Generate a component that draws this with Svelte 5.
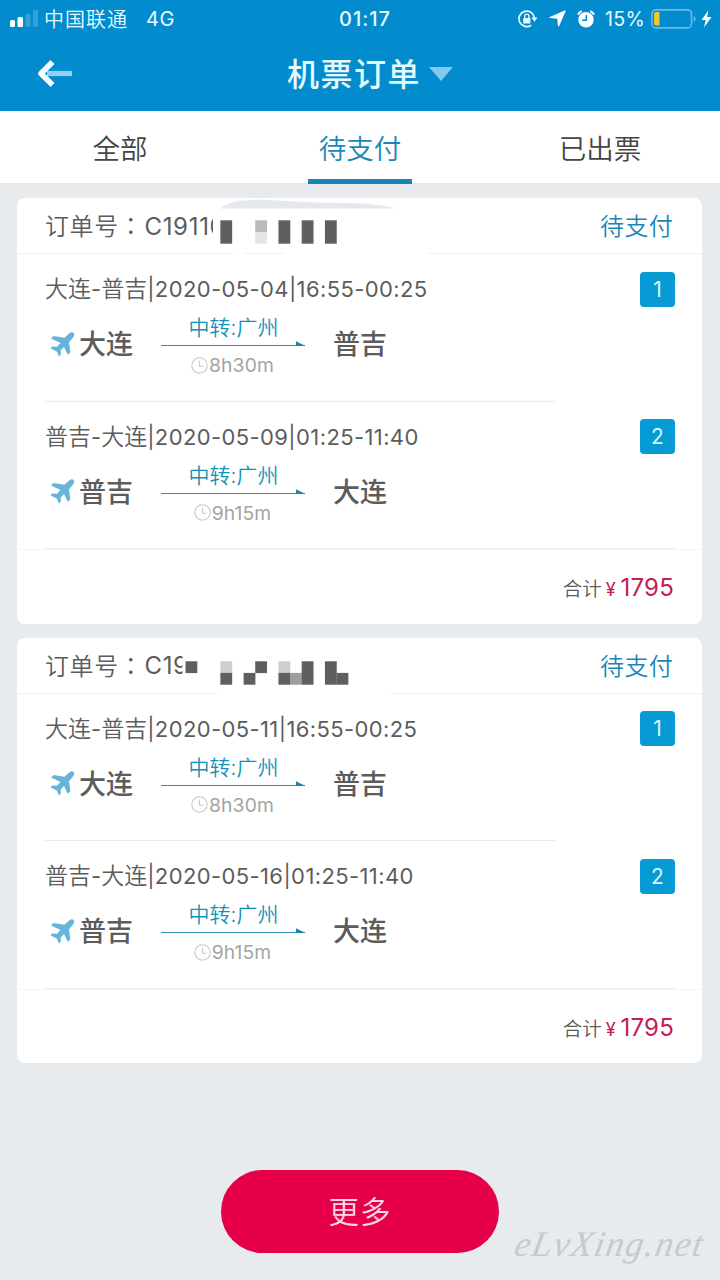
<script lang="ts">
  type Block = [number, number, string];

  const dark = '#5f5f5f';
  let active = $state(1);
  const tabs = ['全部', '待支付', '已出票'];

  // mosaic cells: column, row, colour
  const orders = [
    {
      no: 'C19110',
      cut: 196,
      gaps: [[216, 11], [267, 144]],
      smudge: true,
      top: 22.3,
      blocks: [
        [3, 0, dark], [3, 1, dark], [6, 0, '#bababa'], [6, 1, '#e5e5e5'],
        [8, 0, dark], [8, 1, dark], [10, 0, dark], [10, 1, dark], [12, 0, dark], [12, 1, dark]
      ] as Block[],
      legs: [
        { from: '大连', to: '普吉', date: '2020-05-04', time: '16:55-00:25', via: '广州', cost: '8h30m' },
        { from: '普吉', to: '大连', date: '2020-05-09', time: '01:25-11:40', via: '广州', cost: '9h15m' }
      ],
      total: 1795
    },
    {
      no: 'C19',
      cut: 165.5,
      gaps: [[201, 172]],
      smudge: false,
      top: 23.3,
      blocks: [
        [0, 0, dark], [3, 0, '#cecece'], [3, 1, dark], [5, 1, dark], [6, 0, dark],
        [8, 0, '#cecece'], [8, 1, dark], [9, 1, '#9e9e9e'], [10, 0, dark], [10, 1, dark],
        [12, 0, dark], [12, 1, dark], [13, 1, dark]
      ] as Block[],
      legs: [
        { from: '大连', to: '普吉', date: '2020-05-11', time: '16:55-00:25', via: '广州', cost: '8h30m' },
        { from: '普吉', to: '大连', date: '2020-05-16', time: '01:25-11:40', via: '广州', cost: '9h15m' }
      ],
      total: 1795
    }
  ];
</script>

<div class="app">
  <header>
    <div class="status">
      <div class="side">
        <svg class="signal" width="28" height="18" viewBox="0 0 28 18">
          <rect x="0" y="10" width="5" height="7" rx="1.5" fill="#fff" />
          <rect x="7.5" y="7" width="5.5" height="10" rx="1.5" fill="#fff" />
          <rect x="15.5" y="3.5" width="5" height="13.5" rx="1.5" fill="#369fda" />
          <rect x="23" y="0" width="5" height="17" rx="1.5" fill="#369fda" />
        </svg>
        <span class="carrier">中国联通</span>
        <span class="net">4G</span>
      </div>
      <span class="clock">01:17</span>
      <div class="side right">
        <svg width="20" height="18" viewBox="0 0 20 18" fill="none" stroke="#e6fbff" stroke-width="1.7">
          <path d="M13.2 15.3A7.8 7.8 0 1 1 16.5 8" />
          <path d="M13.4 7.6h6.2l-3.1 4.2z" fill="#e6fbff" stroke="none" />
          <rect x="5.2" y="8" width="7.2" height="5.5" rx=".6" fill="#e6fbff" stroke="none" />
          <path d="M6.7 8V6.3a2.1 2.1 0 0 1 4.2 0V8" stroke-width="1.3" />
        </svg>
        <svg class="loc" width="17" height="17" viewBox="0 0 17 17"><path d="M15.7.4q1.2-.2.8 1L10.2 16q-.9 1.2-1.3-.3L8.3 8.7 1 8q-1.4-.3-.3-1.1z" fill="#fff" /></svg>
        <svg class="alarm" width="18" height="18" viewBox="0 0 18 18">
          <circle cx="9" cy="9.7" r="7.7" fill="#fff" />
          <path d="M.9 4.6A10 10 0 0 1 4.8 1.2M17.1 4.6a10 10 0 0 0-3.9-3.4" fill="none" stroke="#fff" stroke-width="2" />
          <path d="M9.3 5v5.3H5.2" fill="none" stroke="#028bcd" stroke-width="1.5" />
        </svg>
        <span class="percent">15%</span>
        <svg class="battery" width="45" height="20" viewBox="0 0 45 20">
          <rect x=".9" y=".9" width="39.6" height="18" rx="4" fill="none" stroke="#68bce7" stroke-width="1.6" />
          <path d="M42.6 7c2.6.8 2.6 5 0 6z" fill="#68bce7" />
          <path d="M8.5 3v13.5H5.2a2.2 2.2 0 0 1-2.2-2.2V5.2A2.2 2.2 0 0 1 5.2 3z" fill="#edc832" />
        </svg>
        <svg class="bolt" width="11" height="18" viewBox="0 0 11 18"><path d="M7.4.3.5 10h4.2L3 17.6 10.5 7H6.2z" fill="#fff" /></svg>
      </div>
    </div>
    <div class="nav">
      <svg class="back" width="36" height="30" viewBox="0 0 36 30">
        <path d="M11 14.5h25" stroke="#91d2f2" stroke-width="5.2" />
        <path d="M16.5 3 5 14.5 16.5 26" fill="none" stroke="#f5feff" stroke-width="5.6" stroke-linejoin="round" />
      </svg>
      <h1>机票订单</h1>
      <svg class="caret" width="24" height="14" viewBox="0 0 24 14"><path d="M0 0h24L12 14z" fill="#83c9ee" /></svg>
    </div>
  </header>

  <nav class="tabs">
    {#each tabs as tab, i}
      <button class:active={active === i} onclick={() => (active = i)}><span>{tab}</span></button>
    {/each}
  </nav>

  <main>
    {#each orders as order}
      <section class="card">
        <div class="head">
          <span class="label">订单号：</span><span class="no">{order.no}</span>
          <span class="state">待支付</span>
          <svg class="mask" width="685" height="57" viewBox="0 0 685 57">
            <rect x={order.cut} y="8" width="176" height="40" fill="#fff" />
            {#each order.gaps as [x, w]}
              <rect {x} y="50" width={w} height="7" fill="#fff" />
            {/each}
            {#if order.smudge}
              <path d="M203 10.5C211 4 224 1.5 245 1.8S290 5 325 5q35 0 54 5.5z" fill="#e7e8ec" />
            {/if}
            {#each order.blocks as [col, row, fill]}
              <rect x={168.5 + col * 11.62} y={order.top + row * 11.6} width="11.8" height="11.8" {fill} />
            {/each}
          </svg>
        </div>

        {#each order.legs as leg, i}
          <div class="leg">
            <div class="info">
              <span class="trip"><b>{leg.from}</b>-<b>{leg.to}</b><span class="when">|{leg.date}|{leg.time}</span></span>
              <span class="badge">{i + 1}</span>
            </div>
            <div class="route">
              <svg class="plane" width="25" height="25" viewBox="0 0 25 25">
                <path d="M23.6.9c1.3 1.3.5 3.5-1.2 5.3l-3.4 4 1.4 10-2.7 2.5-3.7-7.8-3.3 3.5.2 4.1L9 24.5l-2.3-5-6.4-3.3 1.9-1.7 4.6.3 3.7-3.8L1 6.6 3.6 3.9 14.5 5.8l4.1-3.7C20.3.4 22.4-.3 23.6.9z" fill="#67b4da" />
              </svg>
              <span class="city">{leg.from}</span>
              <div class="mid">
                <span class="via">中转:{leg.via}</span>
                <svg class="line" width="145" height="7" viewBox="0 0 145 7">
                  <path d="M0 5.5h144" stroke="#2a8fbf" stroke-width="1.2" />
                  <path d="M135 1.2 144.5 6H135z" fill="#1d82b3" />
                </svg>
                <span class="cost">
                  <svg width="17" height="17" viewBox="0 0 17 17" fill="none" stroke="#c8c8c8" stroke-width="1.1">
                    <circle cx="8.5" cy="8.5" r="7.7" />
                    <path d="M8.5 3.8v5.4h4.2" />
                  </svg>{leg.cost}
                </span>
              </div>
              <span class="city">{leg.to}</span>
            </div>
          </div>
        {/each}

        <div class="foot">
          <span class="sum">合计</span><span class="yen">¥</span><span class="price">{order.total}</span>
        </div>
      </section>
    {/each}
  </main>

  <button class="more">更多</button>
  <span class="site">eLvXing.net</span>
</div>

<style>
:global(body) { background: #e7ebee; }
.app {
  position: relative; width: 720px; height: 1280px; overflow: hidden;
  display: flex; flex-direction: column; background: #e7ebee;
  font-family: Inter, "Noto Sans CJK SC", sans-serif; font-weight: 350; color: #5c5c5c;
}
svg { display: block; flex: none; }
button { border: 0; padding: 0; background: none; font: inherit; color: inherit; }

header { height: 111px; background: #028bcd; color: #e6fbff; flex: none; }
.status { height: 37px; display: flex; align-items: center; font-size: 18px; }
.side { flex: 1; display: flex; align-items: center; padding-left: 10px; }
.side.right { justify-content: flex-end; padding: 0 8px 0 0; }
.carrier { font-size: 20px; letter-spacing: 1px; margin-left: 6px; }
.net { margin-left: 18px; font-size: 20px; letter-spacing: .5px; font-weight: 400; }
.clock { width: 54px; margin-left: 8px; text-align: center; font-size: 20px; font-weight: 500; letter-spacing: 1px; white-space: nowrap; }
.loc { margin-left: 11px; }
.alarm { margin-left: 11px; }
.percent { margin-left: 10px; font-size: 19.7px; letter-spacing: .2px; font-weight: 400; }
.battery { margin-left: 6px; }
.bolt { margin-left: 5px; }

.nav { height: 74px; display: flex; align-items: center; padding-left: 36px; }
.back { margin-bottom: 1px; }
h1 { margin: 0 0 0 215px; font-size: 32px; font-weight: 500; letter-spacing: 1.5px; line-height: 1; position: relative; top: 1px; }
.caret { margin-left: 8px; margin-bottom: 1px; }

.tabs { height: 72px; flex: none; display: flex; background: #fff; }
.tabs button { flex: 1; display: flex; justify-content: center; font-size: 27.5px; color: #454545; }
.tabs span { height: 73px; line-height: 76px; padding: 0 11px; box-sizing: border-box; position: relative; }
.tabs .active { color: #1b86b9; }
.tabs .active span { border-bottom: 5px solid #1a84b8; }

main { padding: 15px 18px 0 17px; display: flex; flex-direction: column; gap: 14px; }
.card { height: 425.5px; background: #fff; border-radius: 8px; display: flex; flex-direction: column; }
.head {
  position: relative; height: 53px; display: flex; align-items: center;
  padding: 0 29px 2px 28px; border-bottom: 1px solid #f0f0f0; font-size: 24px;
}
.label { font-family: "Noto Sans CJK TC", sans-serif; letter-spacing: .6px; }
.no { letter-spacing: .7px; margin: 3px 0 0 1px; font-weight: 400; }
.state { margin-left: auto; color: #1b86b9; letter-spacing: .3px; }
.mask { position: absolute; left: 0; top: 0; }

.leg { height: 147.5px; box-sizing: border-box; padding: 17px 27px 0 28px; position: relative; }
.leg::after { content: ''; position: absolute; left: 28px; bottom: 0; width: 511px; height: 1px; background: #ececec; }
.leg + .leg::after { width: 630px; height: 2px; bottom: -1px; background: #f0f0f0; }
.info { height: 36px; display: flex; align-items: center; justify-content: space-between; font-size: 22px; font-weight: 400; }
.trip { margin-bottom: 4px; }
.when { letter-spacing: .39px; }
.info b { font-size: 23px; font-weight: 350; }
.badge { width: 35px; height: 35px; border-radius: 4px; background: #069bd5; color: #d9f7ff; line-height: 35px; text-align: center; font-size: 21px; }
.route { display: flex; align-items: center; height: 60px; margin-top: 7px; }
.plane { margin-left: 5px; }
.city { font-size: 27px; font-weight: 500; width: 54px; margin: 0 0 3px 4px; white-space: nowrap; }
.mid { width: 145px; margin: 0 23px 0 28px; display: flex; flex-direction: column; align-items: center; }
.via { font-size: 21px; line-height: 22px; position: relative; top: 3px; color: #1491ba; }
.line { margin: 4px 0 5px; }
.cost { display: flex; align-items: center; gap: 1px; font-size: 19.3px; letter-spacing: .1px; line-height: 22px; font-weight: 400; color: #a4a4a4; position: relative; top: 2px; left: -1px; }

.foot { flex: 1; display: flex; align-items: baseline; justify-content: flex-end; padding: 23px 28px 0 0; border-top: 1px solid #f5f5f5; }
.sum { font-size: 19.5px; }
.yen { font-size: 18px; margin: 0 5px 0 4px; color: #c41c58; font-weight: 400; }
.price { font-size: 24px; color: #c41c58; font-weight: 400; letter-spacing: .2px; }

.more {
  width: 278px; height: 83px; margin: 107px 0 0 221px; padding-bottom: 4px; border-radius: 42px;
  background: #e50049; color: #ffd5e2; font-size: 30.5px; letter-spacing: 1px;
}
.site {
  position: absolute; left: 515px; top: 1223px; color: #c7c9cb;
  font: italic 36px "Liberation Serif", serif; letter-spacing: 1.5px; transform: skewX(-10deg);
}
</style>
